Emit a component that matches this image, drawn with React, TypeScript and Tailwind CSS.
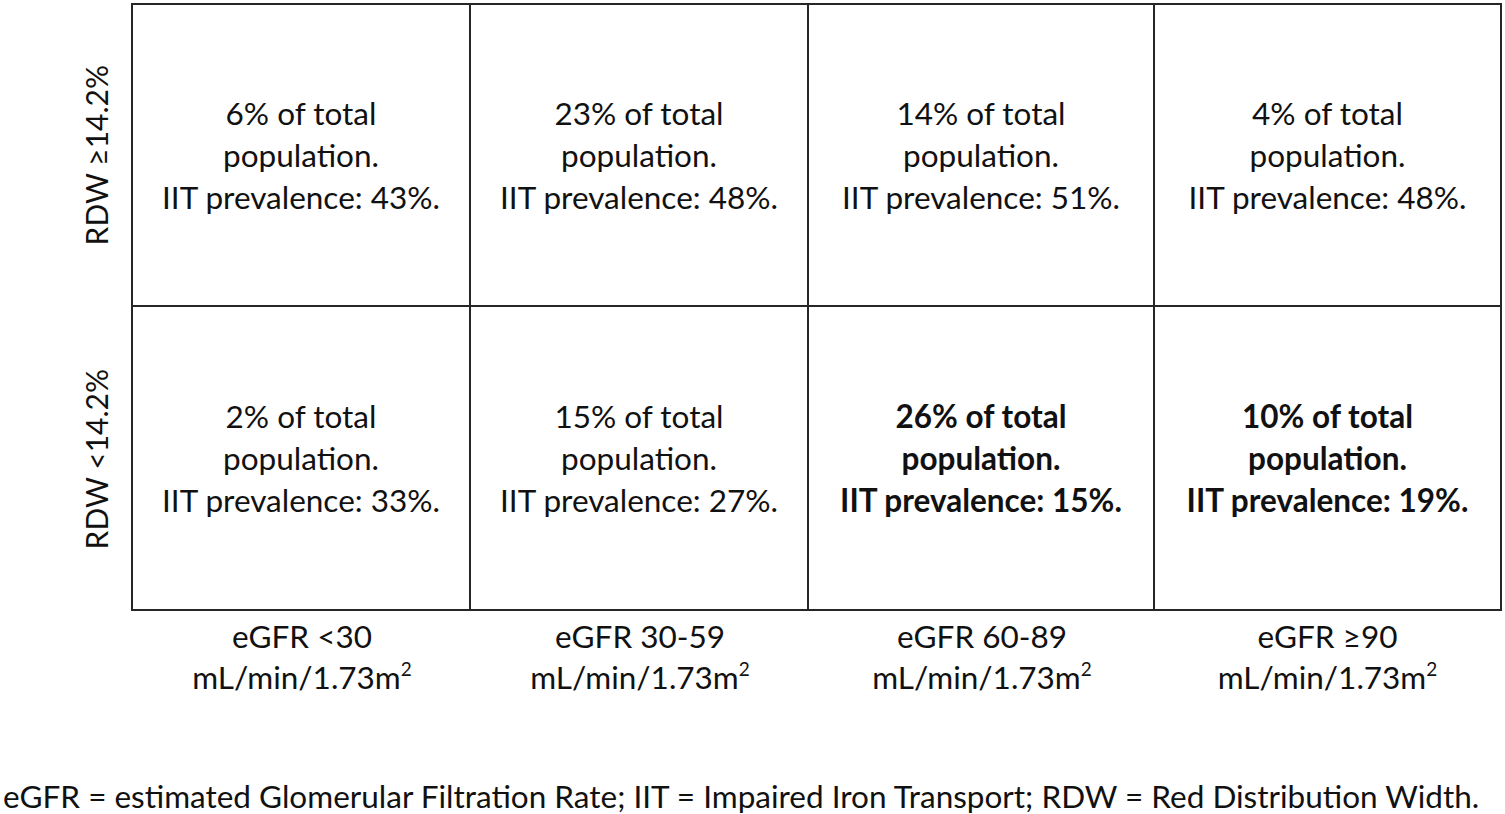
import React, { FC } from 'react';

// one row of the RDW x eGFR grid
interface CellData {
  share: string
  prevalence: string
  bold?: boolean
}

const rows: { label: string; cells: CellData[] }[] = [
  {
    label: "RDW ≥14.2%",
    cells: [
      { share: "6%", prevalence: "43%" },
      { share: "23%", prevalence: "48%" },
      { share: "14%", prevalence: "51%" },
      { share: "4%", prevalence: "48%" },
    ],
  },
  {
    label: "RDW <14.2%",
    cells: [
      { share: "2%", prevalence: "33%" },
      { share: "15%", prevalence: "27%" },
      { share: "26%", prevalence: "15%", bold: true },
      { share: "10%", prevalence: "19%", bold: true },
    ],
  },
];

const columns: string[] = ["eGFR <30", "eGFR 30-59", "eGFR 60-89", "eGFR ≥90"];

const Cell: FC<{ cell: CellData; last: boolean; bottom: boolean }> = ({ cell, last, bottom }) => {
  return (
    <div
      className={
        "flex items-center justify-center text-center border-[#262626] " +
        (last ? "" : "border-r-2 ") +
        (bottom ? "" : "border-b-2 ") +
        (cell.bold ? "font-bold" : "font-normal")
      }
    >
      <div>
        <div>{cell.share} of total</div>
        <div>population.</div>
        <div>IIT prevalence: {cell.prevalence}.</div>
      </div>
    </div>
  );
};

export default function App() {
  return (
    <div
      className="w-[1505px] h-[814px] bg-white text-[#111] text-[31.5px] leading-[42px] overflow-hidden"
      style={{ fontFamily: "Lato, 'Open Sans', sans-serif" }}
    >
      <div className="flex pt-[3px]">
        {/* rotated row labels */}
        <div className="w-[131px] flex flex-col">
          {rows.map((r) => (
            <div key={r.label} className="h-[304px] flex items-center justify-end pr-[14px]">
              <div className="[writing-mode:vertical-rl] rotate-180 whitespace-nowrap text-[30px]">{r.label}</div>
            </div>
          ))}
        </div>
        <div className="grid grid-cols-[338px_338px_346px_345px] grid-rows-[302px_302px] border-2 border-[#262626] box-content">
          {rows.map((r, ri) =>
            r.cells.map((c, ci) => (
              <Cell key={r.label + ci} cell={c} last={ci === 3} bottom={ri === 1} />
            ))
          )}
        </div>
      </div>
      {/* eGFR column labels */}
      <div className="ml-[133px] grid grid-cols-[338px_338px_346px_345px] mt-[5px] leading-[41px]">
        {columns.map((c) => (
          <div key={c} className="text-center">
            <div>{c}</div>
            <div>
              mL/min/1.73m<span className="relative -top-[13px] text-[19px]">2</span>
            </div>
          </div>
        ))}
      </div>
      <div className="mt-[73px] pl-[3px] whitespace-nowrap">
        eGFR = estimated Glomerular Filtration Rate; IIT = Impaired Iron Transport; RDW = Red Distribution Width.
      </div>
    </div>
  );
}
